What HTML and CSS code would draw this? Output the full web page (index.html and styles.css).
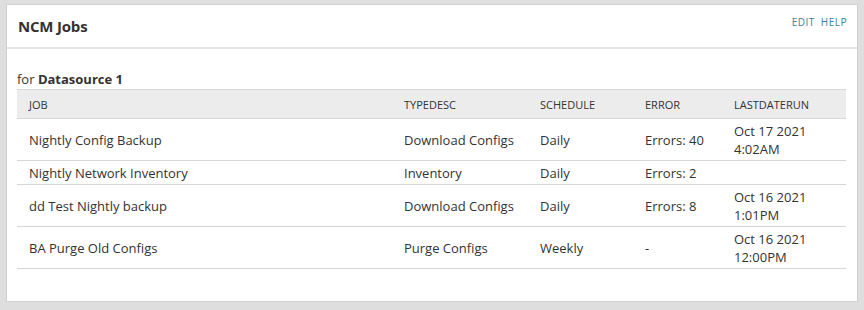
FILE: index.html
```html
<!DOCTYPE html>
<html>
<head>
<meta charset="utf-8">
<link rel="stylesheet" href="styles.css">
</head>
<body>
<div class="card">
  <div class="card-head">
    <h2 class="title">NCM Jobs</h2>
    <div class="actions"><a class="act">EDIT</a><a class="act">HELP</a></div>
  </div>
  <div class="card-body">
    <div class="for">for <b>Datasource 1</b></div>
    <table class="jobs">
      <colgroup>
        <col class="c1"><col class="c2"><col class="c3"><col class="c4"><col class="c5">
      </colgroup>
      <thead>
        <tr><th>JOB</th><th>TYPEDESC</th><th>SCHEDULE</th><th>ERROR</th><th>LASTDATERUN</th></tr>
      </thead>
      <tbody>
        <tr><td>Nightly Config Backup</td><td>Download Configs</td><td>Daily</td><td>Errors: 40</td><td>Oct 17 2021<br>4:02AM</td></tr>
        <tr><td>Nightly Network Inventory</td><td>Inventory</td><td>Daily</td><td>Errors: 2</td><td></td></tr>
        <tr><td>dd Test Nightly backup</td><td>Download Configs</td><td>Daily</td><td>Errors: 8</td><td>Oct 16 2021<br>1:01PM</td></tr>
        <tr><td>BA Purge Old Configs</td><td>Purge Configs</td><td>Weekly</td><td>-</td><td>Oct 16 2021<br>12:00PM</td></tr>
      </tbody>
    </table>
  </div>
</div>
</body>
</html>
```
FILE: styles.css
```css
html, body {
  margin: 0;
  padding: 0;
  background: #dedede;
  font-family: "Open Sans", "Liberation Sans", sans-serif;
  color: #333;
}
body {
  padding: 4px 6px 8px 6px;
}
.card {
  background: #fff;
  border: 1px solid #d0d0d0;
  height: 298px;
  box-sizing: border-box;
}
.card-head {
  display: flex;
  align-items: center;
  justify-content: space-between;
  height: 42px;
  border-bottom: 2px solid #e4e4e4;
  padding: 0 10px 0 11px;
}
.title {
  margin: 0;
  font-size: 15px;
  font-weight: 700;
  color: #333;
  letter-spacing: -0.2px;
}
.actions {
  display: flex;
  gap: 6px;
  margin-top: -8px;
}
.act {
  font-size: 10px;
  letter-spacing: 0.5px;
  color: #3a7fa3;
  font-weight: 400;
}
.card-body {
  padding: 22px 11px 0 10px;
}
.for {
  font-size: 13px;
  line-height: 17px;
  height: 18px;
}
.for b { font-weight: 700; }
.jobs {
  width: 100%;
  border-collapse: collapse;
  font-size: 13px;
  table-layout: fixed;
}
.c1 { width: 375px; }
.c2 { width: 136px; }
.c3 { width: 105px; }
.c4 { width: 89px; }
.jobs th {
  background: #ececec;
  border-top: 1px solid #d8d8d8;
  border-bottom: 1px solid #d8d8d8;
  text-align: left;
  font-weight: 400;
  font-size: 11px;
  height: 28px;
  padding: 0 12px;
  color: #333;
}
.jobs td {
  border-bottom: 1px solid #d6d6d6;
  padding: 3px 12px 2px 12px;
  line-height: 18px;
  vertical-align: middle;
}
```
